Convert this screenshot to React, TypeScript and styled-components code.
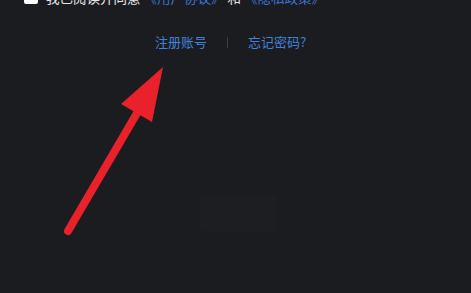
import styled, { createGlobalStyle } from "styled-components";

const GlobalStyle = createGlobalStyle`
  html, body {
    margin: 0;
    padding: 0;
    background: #1b1c20;
    overflow: hidden;
  }
  body {
    font-family: "Noto Sans CJK SC", "Noto Sans", sans-serif;
  }
`;

const Page = styled.div`
  position: relative;
  width: 471px;
  height: 293px;
  background: #1b1c20;
  display: flex;
  flex-direction: column;
  align-items: stretch;
  overflow: hidden;
`;

const AgreeRow = styled.label`
  display: flex;
  align-items: center;
  gap: 8px;
  margin-top: -11px;
  padding-left: 24px;
  height: 16px;
  font-size: 13.5px;
  line-height: 16px;
  color: #e6e6e6;
  white-space: nowrap;
`;

const Box = styled.span`
  width: 14px;
  height: 14px;
  border-radius: 2px;
  background: #ffffff;
  flex: none;
`;

const Link = styled.span`
  color: #3b74c9;
`;

const LinksRow = styled.div`
  display: flex;
  justify-content: center;
  align-items: center;
  gap: 20px;
  margin-top: 29px;
  padding-right: 10px;
  font-size: 13px;
  line-height: 16px;
`;

const TextLink = styled.a`
  color: #4282dc;
  text-decoration: none;
`;

const Divider = styled.span`
  width: 1px;
  height: 11px;
  background: #3d3f45;
`;

const GhostButton = styled.div`
  align-self: center;
  margin-top: 145px;
  margin-left: 4px;
  width: 76px;
  height: 36px;
  border-radius: 3px;
  background: #1d1e22;
`;

const Arrow = styled.svg`
  position: absolute;
  left: 0;
  top: 0;
  pointer-events: none;
`;

export default function App() {
  return (
    <>
      <GlobalStyle />
      <Page>
        <AgreeRow>
          <Box />
          <span>
            我已阅读并同意 <Link>《用户协议》</Link> 和 <Link>《隐私政策》</Link>
          </span>
        </AgreeRow>
        <LinksRow>
          <TextLink>注册账号</TextLink>
          <Divider />
          <TextLink>忘记密码?</TextLink>
        </LinksRow>
        <GhostButton />
        <Arrow width="471" height="293" viewBox="0 0 471 293">
          <line
            x1="68"
            y1="231"
            x2="140"
            y2="108"
            stroke="#e8212b"
            strokeWidth="8"
            strokeLinecap="round"
          />
          <polygon points="163,67 121,104 152,122" fill="#e8212b" />
        </Arrow>
      </Page>
    </>
  );
}
